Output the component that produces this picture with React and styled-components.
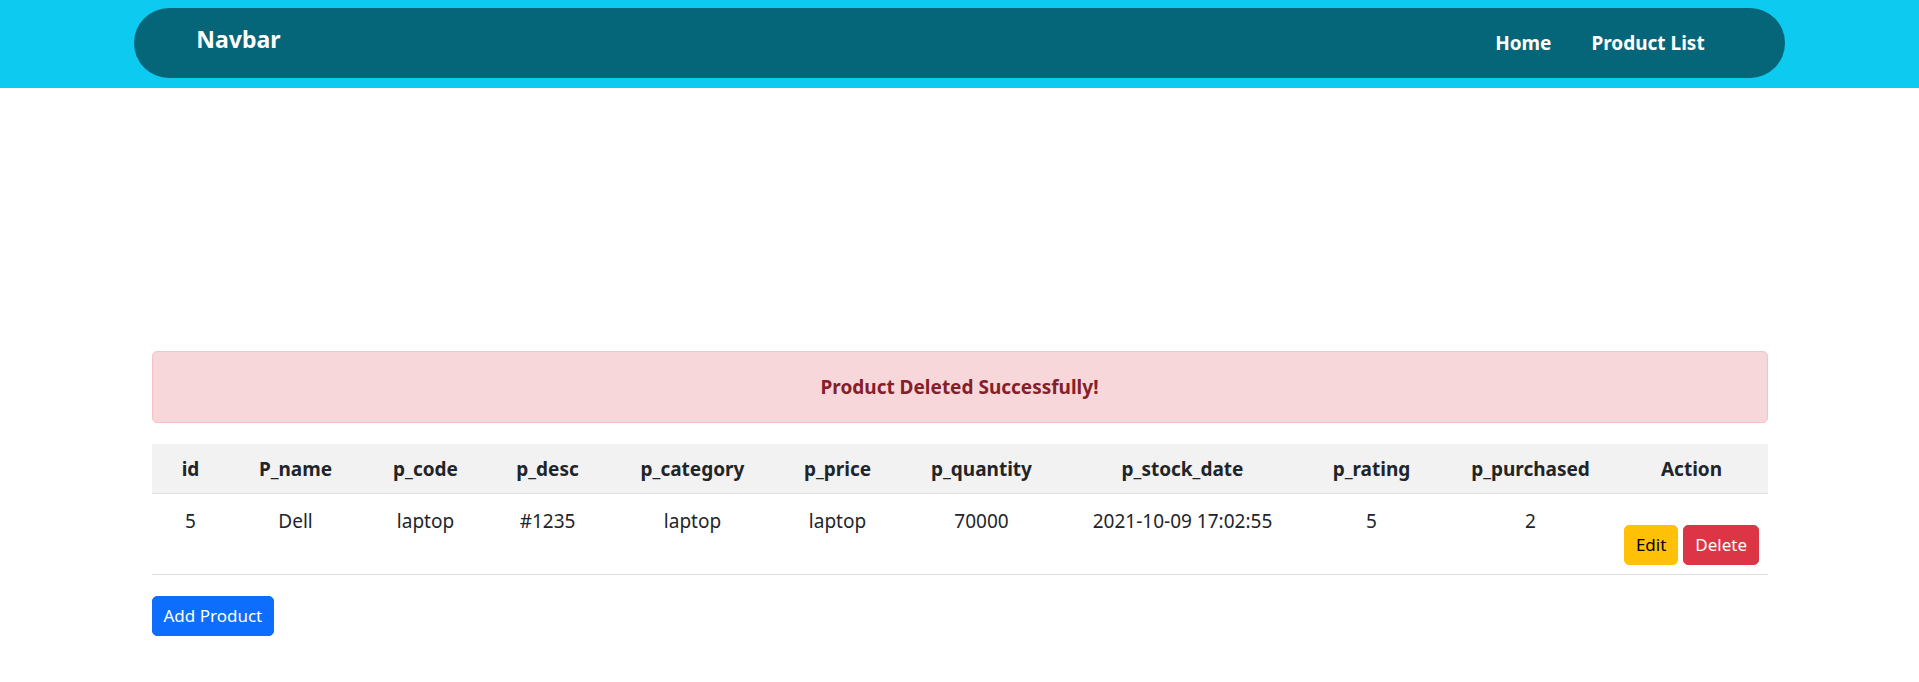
import styled, { createGlobalStyle } from 'styled-components';

const GlobalStyle = createGlobalStyle`
  body {
    margin: 0;
    font-family: "Noto Sans", "Open Sans", sans-serif;
    font-size: 16px;
    color: #212529;
    background: #fff;
  }
`;

const products = [
  {
    id: 5,
    name: 'Dell',
    code: 'laptop',
    desc: '#1235',
    category: 'laptop',
    price: 'laptop',
    quantity: '70000',
    stockDate: '2021-10-09 17:02:55',
    rating: 5,
    purchased: 2,
  },
];

const columns = [
  { label: 'id', width: 78 },
  { label: 'P_name', width: 132 },
  { label: 'p_code', width: 128 },
  { label: 'p_desc', width: 116 },
  { label: 'p_category', width: 174 },
  { label: 'p_price', width: 116 },
  { label: 'p_quantity', width: 172 },
  { label: 'p_stock_date', width: 230 },
  { label: 'p_rating', width: 148 },
  { label: 'p_purchased', width: 170 },
  { label: 'Action' },
];

function App() {
  return (
    <>
      <GlobalStyle />
      <Header>
        <Nav>
          <Brand>Navbar</Brand>
          <NavLinks>
            <NavLink href="#">Home</NavLink>
            <NavLink href="#">Product List</NavLink>
          </NavLinks>
        </Nav>
      </Header>

      <Container>
        <Alert>Product Deleted Successfully!</Alert>
        <Table>
          <colgroup>
            {columns.map((c) => (
              <Col key={c.label} $width={c.width} />
            ))}
          </colgroup>
          <thead>
            <tr>
              {columns.map((c) => (
                <Th key={c.label}>{c.label}</Th>
              ))}
            </tr>
          </thead>
          <tbody>
            {products.map((p) => (
              <tr key={p.id}>
                <Td>{p.id}</Td>
                <Td>{p.name}</Td>
                <Td>{p.code}</Td>
                <Td>{p.desc}</Td>
                <Td>{p.category}</Td>
                <Td>{p.price}</Td>
                <Td>{p.quantity}</Td>
                <Td>{p.stockDate}</Td>
                <Td>{p.rating}</Td>
                <Td>{p.purchased}</Td>
                <Td>
                  <Actions>
                    <Button variant="warning">Edit</Button>
                    <Button variant="danger">Delete</Button>
                  </Actions>
                </Td>
              </tr>
            ))}
          </tbody>
        </Table>
        <Button variant="primary">Add Product</Button>
      </Container>
    </>
  );
}

export default App;

const Header = styled.header`
  background: #0dcaf0;
  padding: 8px 0 10px;
`;

const Nav = styled.nav`
  width: 86%;
  height: 70px;
  margin: 0 auto;
  box-sizing: border-box;
  border-radius: 35px;
  background: #066679;
  display: flex;
  align-items: center;
  justify-content: space-between;
  padding: 0 80px 0 62px;
`;

const Brand = styled.div`
  color: #fff;
  font-weight: 700;
  font-size: 23px;
  margin-top: -8px;
`;

const NavLinks = styled.div`
  display: flex;
  gap: 40px;
`;

const NavLink = styled.a`
  color: #fff;
  font-weight: 700;
  font-size: 19px;
  text-decoration: none;
`;

const Container = styled.main`
  max-width: 1616px;
  margin: 263px auto 0;
`;

const Alert = styled.div`
  background: #f8d7da;
  border: 1px solid #f5c2c7;
  border-radius: 5px;
  color: #842029;
  font-size: 19px;
  font-weight: 700;
  text-align: center;
  line-height: 28px;
  padding: 21px 16px;
  margin-bottom: 21px;
`;

const Table = styled.table`
  width: 100%;
  table-layout: fixed;
  border-collapse: collapse;
  margin-bottom: 21px;
  font-size: 19px;
`;

const Col = styled.col`
  width: ${(p) => (p.$width ? `${p.$width}px` : 'auto')};
`;

const Th = styled.th`
  background: #f2f2f2;
  font-weight: 700;
  line-height: 28px;
  padding: 11px 4px 10px;
  border-bottom: 1px solid #dee2e6;
  text-align: center;
  white-space: nowrap;
`;

const Td = styled.td`
  line-height: 28px;
  padding: 13px 4px 9px;
  text-align: center;
  vertical-align: top;
  border-bottom: 1px solid #dee2e6;
  white-space: nowrap;
`;

const Actions = styled.div`
  display: flex;
  justify-content: center;
  gap: 5px;
  margin-top: 18px;
`;

const colors = {
  warning: { bg: '#ffc107', fg: '#000' },
  danger: { bg: '#dc3545', fg: '#fff' },
  primary: { bg: '#0d6efd', fg: '#fff' },
};

const Button = styled.button`
  font-family: inherit;
  font-size: 17px;
  line-height: 24px;
  padding: 7px 11px;
  border: 1px solid ${(p) => colors[p.variant].bg};
  border-radius: 5px;
  background: ${(p) => colors[p.variant].bg};
  color: ${(p) => colors[p.variant].fg};
  cursor: pointer;
`;
